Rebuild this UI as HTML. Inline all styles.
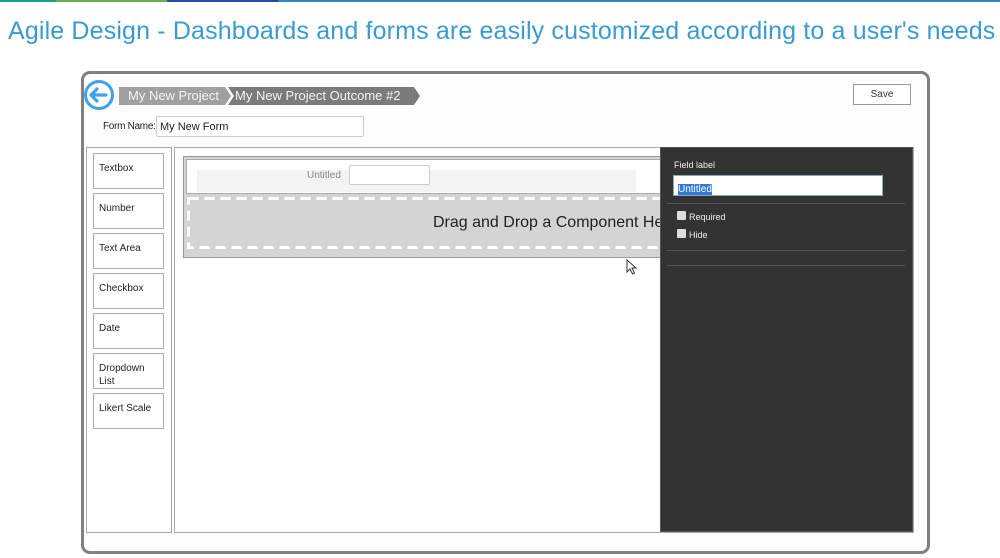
<!DOCTYPE html>
<html><head><style>
*{margin:0;padding:0;box-sizing:border-box}
body{width:1000px;height:558px;background:#fff;position:relative;overflow:hidden;font-family:"Liberation Sans",sans-serif}
.a{position:absolute}
.strip{top:0;height:2px}
h1{position:absolute;left:8px;top:17px;font-weight:normal;font-size:25px;color:#3a9bd0;letter-spacing:0.15px;white-space:nowrap}
.frame{left:81px;top:71px;width:849px;height:483px;border:3px solid #808080;border-radius:9px;background:#fdfdfd}
.box{left:93px;width:71px;height:36px;border:1px solid #aaa;background:#fff;font-size:10px;color:#222;padding:8px 0 0 5px;line-height:13px}
</style></head><body>
<div class="a strip" style="left:0;width:56px;background:#1aa08a"></div>
<div class="a strip" style="left:56px;width:111px;background:#6ab04c"></div>
<div class="a strip" style="left:167px;width:111px;background:#2b4aa8"></div>
<div class="a strip" style="left:278px;width:722px;background:#2e86c1"></div>
<h1>Agile Design - Dashboards and forms are easily customized according to a user's needs</h1>
<div class="a frame"></div>
<svg class="a" style="left:83px;top:79px" width="32" height="32" viewBox="0 0 32 32"><circle cx="16" cy="16" r="13.5" fill="#fff" stroke="#3ea2e8" stroke-width="3"/><path d="M8 16 H23 M8 16 L14 10 M8 16 L14 22" stroke="#3ea2e8" stroke-width="3.2" fill="none" stroke-linecap="round"/></svg>
<svg class="a" style="left:119px;top:87px" width="302" height="18"><polygon points="0,0 106,0 112,9 106,18 0,18" fill="#a0a0a0"/><polygon points="109,0 295,0 301,9 295,18 109,18 115,9" fill="#7b7b7b"/></svg>
<div class="a" style="left:128px;top:88px;font-size:13px;color:#f4f4f4;white-space:nowrap">My New Project</div>
<div class="a" style="left:235px;top:88px;font-size:13px;color:#f4f4f4;white-space:nowrap">My New Project Outcome #2</div>
<div class="a" style="left:853px;top:84px;width:58px;height:21px;border:1px solid #999;background:#fff;font-size:10px;color:#333;text-align:center;line-height:19px">Save</div>
<div class="a" style="left:103px;top:121px;font-size:10px;color:#222;letter-spacing:-0.3px;white-space:nowrap">Form Name:</div>
<div class="a" style="left:156px;top:116px;width:208px;height:21px;border:1px solid #ccc;border-radius:2px;background:#fff;font-size:11px;color:#222;padding:4px 0 0 3px">My New Form</div>
<div class="a" style="left:86px;top:147px;width:86px;height:386px;border:1px solid #aaa;background:#fff"></div>
<div class="a box" style="top:153px">Textbox</div>
<div class="a box" style="top:193px">Number</div>
<div class="a box" style="top:233px">Text Area</div>
<div class="a box" style="top:273px">Checkbox</div>
<div class="a box" style="top:313px">Date</div>
<div class="a box" style="top:353px">Dropdown<br>List</div>
<div class="a box" style="top:393px">Likert Scale</div>
<div class="a" style="left:174px;top:147px;width:740px;height:386px;border:1px solid #aaa;background:#fff"></div>
<div class="a" style="left:183px;top:156px;width:478px;height:102px;border:1px solid #999;background:#d4d4d4"></div>
<div class="a" style="left:186px;top:159px;width:475px;height:35px;border:1px solid #aaa;background:#fff"></div>
<div class="a" style="left:197px;top:170px;width:439px;height:22px;background:#f3f3f3"></div>
<div class="a" style="left:307px;top:170px;font-size:10px;color:#888">Untitled</div>
<div class="a" style="left:349px;top:165px;width:81px;height:20px;border:1px solid #ccc;border-radius:2px;background:#fff"></div>
<svg class="a" style="left:187px;top:197px" width="474" height="52"><rect x="1.5" y="1.5" width="490" height="49" fill="none" stroke="#fff" stroke-width="3" stroke-dasharray="10,6"/></svg>
<div class="a" style="left:433px;top:214px;font-size:16px;color:#222;white-space:nowrap">Drag and Drop a Component He</div>
<div class="a" style="left:660px;top:147px;width:253px;height:385px;background:#333;border:1px solid #555"></div>
<div class="a" style="left:674px;top:160px;font-size:9px;color:#eee">Field label</div>
<div class="a" style="left:673px;top:175px;width:210px;height:21px;border:1px solid #8ab;background:#fff;padding:3px 0 0 4px"><span style="background:#3278d8;color:#fff;font-size:10px">Untitled</span></div>
<div class="a" style="left:667px;top:203px;width:238px;height:1px;background:#555"></div>
<div class="a" style="left:677px;top:211px;width:9px;height:9px;background:#ddd;border-radius:1px"></div>
<div class="a" style="left:689px;top:212px;font-size:9px;color:#eee">Required</div>
<div class="a" style="left:677px;top:229px;width:9px;height:9px;background:#ddd;border-radius:1px"></div>
<div class="a" style="left:689px;top:230px;font-size:9px;color:#eee">Hide</div>
<div class="a" style="left:667px;top:250px;width:238px;height:1px;background:#555"></div>
<div class="a" style="left:667px;top:265px;width:238px;height:1px;background:#555"></div>
<svg class="a" style="left:626px;top:259px" width="12" height="16"><path d="M1 1 L1 13 L4 10 L6.5 15 L8.5 14 L6 9 L10 9 Z" fill="#fff" stroke="#333" stroke-width="1"/></svg>
</body></html>
